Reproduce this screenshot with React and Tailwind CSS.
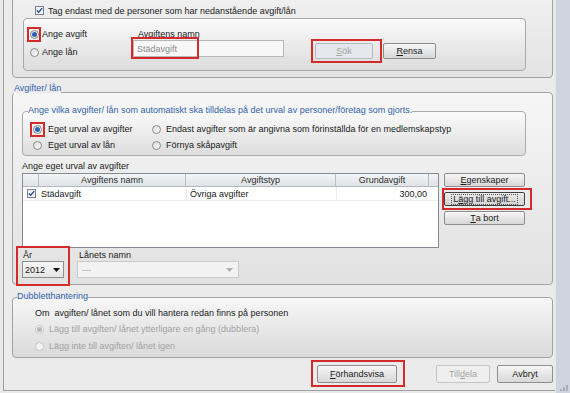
import React from 'react';

// Small Vista-style controls
const Radio = ({ checked, disabled }) => (
  <span
    className={`inline-flex w-[9px] h-[9px] shrink-0 rounded-full border items-center justify-center ${
      disabled ? 'border-[#c8c8c8] bg-[#f3f3f3]' : 'border-[#8a8a8a] bg-gradient-to-br from-[#dedede] to-[#fbfbfb]'
    }`}
  >
    {checked && <span className={`w-[5px] h-[5px] rounded-full ${disabled ? 'bg-[#b9b9b9]' : 'bg-[#2a62b5]'}`} />}
  </span>
);

const Check = () => (
  <span className="inline-flex w-[9px] h-[9px] shrink-0 border border-[#7e8288] bg-[#eef2f9] items-center justify-center">
    <svg width="7" height="7" viewBox="0 0 7 7">
      <path d="M0.8 3.4 L2.7 5.3 L6.2 1.1" fill="none" stroke="#2b4f8f" strokeWidth="1.4" />
    </svg>
  </span>
);

const Btn = ({ children, className = '', disabled, focused }) => (
  <div
    className={`flex items-center justify-center rounded-[2px] border ${
      disabled
        ? 'border-[#b5bac0] bg-[#e4e7eb] text-[#a4a4a4]'
        : focused
        ? 'border-[#3f3f3f] bg-gradient-to-b from-[#ececec] to-[#d2d2d2] text-[#1b1b1b]'
        : 'border-[#8e8e8e] bg-gradient-to-b from-[#f6f6f6] to-[#d8d8d8] text-[#1b1b1b]'
    } ${className}`}
  >
    {children}
  </div>
);

const Mark = ({ className }) => (
  <span className={`absolute border-2 border-[#d42a2a] pointer-events-none ${className}`} />
);

const U = ({ children }) => <span className="underline underline-offset-1">{children}</span>;

const Arrow = ({ color = '#111' }) => (
  <svg width="7" height="4" viewBox="0 0 7 4">
    <path d="M0 0 H7 L3.5 4 Z" fill={color} />
  </svg>
);

export default function App() {
  return (
    <div className="w-[570px] h-[393px] overflow-hidden flex bg-[#e9e9e9] text-[9px] leading-[10px] text-[#1b1b1b] font-['Liberation_Sans',Arial,sans-serif]">
      <div className="w-[3px] shrink-0" />

      {/* Main panel */}
      <div className="w-[552px] h-[391px] shrink-0 border-l border-b border-[#a0a0a0] flex flex-col pl-[8px] pr-[2px] bg-[#ebebeb]">
        {/* Top search box (cut off at the top) */}
        <div className="-mt-[10px] h-[88px] shrink-0 rounded-[4px] border border-[#a3a3a3] bg-gradient-to-b from-[#f1f1f1] to-[#e3e3e3] pt-[14px]">
          <div className="h-[11px] flex items-center gap-[4px] pl-[22px]">
            <Check />
            <span>Tag endast med de personer som har nedanstående avgift/lån</span>
          </div>
          <div className="mt-[2px] ml-[10px] w-[503px] h-[53px] rounded-[4px] border border-[#a9a9a9] bg-gradient-to-b from-[#fafafa] to-[#dcdcdc] flex">
            <div className="w-[109px] pl-[6px] pt-[9px] flex flex-col gap-[6px]">
              <div className="h-[12px] flex items-center gap-[3px]">
                <span className="relative flex">
                  <Radio checked />
                  <Mark className="-left-[3px] -top-[3px] w-[14px] h-[15px]" />
                </span>
                <span>Ange avgift</span>
              </div>
              <div className="h-[12px] flex items-center gap-[3px]">
                <Radio />
                <span>Ange lån</span>
              </div>
            </div>
            <div className="pt-[10px] flex flex-col">
              <span className="h-[10px] pl-[5px]">Avgiftens namn</span>
              <div className="relative mt-[1px] w-[151px] h-[17px] border border-[#b7b7b7] bg-[#f7f7f7] flex items-center pl-[3px] text-[#8d8d8d]">
                Städavgift
                <Mark className="-left-[3px] -top-[4px] w-[68px] h-[22px]" />
              </div>
            </div>
            <div className="pt-[24px] ml-[31px] flex">
              <div className="relative">
                <Btn disabled className="w-[58px] h-[16px]">
                  <U>S</U>ök
                </Btn>
                <Mark className="-left-[4px] -top-[4px] w-[71px] h-[24px]" />
              </div>
              <Btn className="ml-[10px] w-[53px] h-[16px]">
                <U>R</U>ensa
              </Btn>
            </div>
          </div>
        </div>

        {/* Avgifter/ lån */}
        <fieldset className="mt-[5px] rounded-[4px] border border-[#a3a3a3] bg-gradient-to-b from-[#f6f6f6] to-[#e1e1e1] pl-[9px] pb-[6px]">
          <legend className="-ml-[8px] leading-[10px] pb-[8px] text-[#3464ad]">Avgifter/ lån</legend>

          <fieldset className="mt-[4px] w-[504px] rounded-[4px] border border-[#ababab] bg-gradient-to-b from-[#fbfbfb] to-[#dddddd] pl-[10px] pt-[5px] pb-[4px]">
            <legend className="-ml-[5px] leading-[10px] pb-[3px] text-[#3464ad]">
              Ange vilka avgifter/ lån som automatiskt ska tilldelas på det urval av personer/företag som gjorts.
            </legend>
            <div className="grid grid-cols-[119px_auto] gap-y-[4px]">
              <div className="h-[12px] flex items-center gap-[6px]">
                <span className="relative flex">
                  <Radio checked />
                  <Mark className="-left-[3px] -top-[3px] w-[15px] h-[15px]" />
                </span>
                <span>Eget urval av avgifter</span>
              </div>
              <div className="h-[12px] flex items-center gap-[5px]">
                <Radio />
                <span>Endast avgifter som är angivna som förinställda för en medlemskapstyp</span>
              </div>
              <div className="h-[12px] flex items-center gap-[6px]">
                <Radio />
                <span>Eget urval av lån</span>
              </div>
              <div className="h-[12px] flex items-center gap-[5px]">
                <Radio />
                <span>Förnya skåpavgift</span>
              </div>
            </div>
          </fieldset>

          <div className="mt-[5px] h-[10px]">Ange eget urval av avgifter</div>

          <div className="mt-[2px] flex items-start">
            {/* Fee table */}
            <div className="w-[417px] h-[75px] border border-[#868a92] bg-white flex flex-col">
              <div className="h-[13px] grid grid-cols-[16px_147px_150px_93px_1fr] bg-gradient-to-b from-[#f4f5f7] to-[#dfe2e7] border-b border-[#b3b7bf] text-[#2b2b2b]">
                <div className="border-r border-[#b9bdc4]" />
                <div className="border-r border-[#b9bdc4] flex items-center justify-center">Avgiftens namn</div>
                <div className="border-r border-[#b9bdc4] flex items-center justify-center">Avgiftstyp</div>
                <div className="border-r border-[#b9bdc4] flex items-center justify-center">Grundavgift</div>
                <div />
              </div>
              <div className="h-[14px] grid grid-cols-[16px_147px_150px_93px_1fr] border-b border-[#ececec]">
                <div className="flex items-center justify-center">
                  <Check />
                </div>
                <div className="flex items-center pl-[2px]">Städavgift</div>
                <div className="flex items-center pl-[3px] border-l border-[#ececec]">Övriga avgifter</div>
                <div className="flex items-center justify-end pr-[2px] border-l border-[#ececec]">300,00</div>
                <div />
              </div>
            </div>

            {/* Side buttons */}
            <div className="ml-[5px] flex flex-col gap-[5px]">
              <Btn className="w-[81px] h-[14px]">
                <U>E</U>genskaper
              </Btn>
              <div className="relative">
                <Btn focused className="w-[81px] h-[14px]">
                  <span className="outline-1 outline-dotted outline-[#555] px-[1px] leading-[9px]">
                    L<U>ä</U>gg till avgift...
                  </span>
                </Btn>
                <Mark className="-left-[2px] -top-[4px] w-[90px] h-[22px]" />
              </div>
              <Btn className="w-[81px] h-[14px]">
                <U>T</U>a bort
              </Btn>
            </div>
          </div>

          <div className="mt-[2px] flex">
            <div className="relative flex flex-col w-[42px]">
              <span className="h-[10px] pl-[1px]">År</span>
              <div className="mt-[1px] h-[17px] border border-[#8d8d8d] bg-gradient-to-b from-[#f7f7f7] to-[#e6e6e6] flex items-center justify-between pl-[2px] pr-[3px]">
                <span>2012</span>
                <Arrow />
              </div>
              <Mark className="-left-[6px] -top-[4px] w-[54px] h-[40px]" />
            </div>
            <div className="ml-[13px] flex flex-col w-[162px]">
              <span className="h-[10px] pl-[2px]">Lånets namn</span>
              <div className="mt-[1px] h-[17px] border border-[#cbcbcb] bg-[#f2f2f2] flex items-center justify-between pl-[4px] pr-[5px] text-[#a8a8a8]">
                <span>---</span>
                <Arrow color="#b0b0b0" />
              </div>
            </div>
          </div>
        </fieldset>

        {/* Dubbletthantering */}
        <fieldset className="mt-[6px] rounded-[4px] border border-[#a3a3a3] bg-gradient-to-b from-[#f7f7f7] to-[#dadada] pl-[22px] pt-[5px] pb-[5px]">
          <legend className="-ml-[18px] leading-[10px] pb-[2px] text-[#3464ad]">Dubbletthantering</legend>
          <div className="h-[10px]">Om&nbsp; avgiften/ lånet som du vill hantera redan finns på personen</div>
          <div className="mt-[5px] flex flex-col gap-[5px] text-[#a2a2a2]">
            <div className="h-[12px] flex items-center gap-[5px]">
              <Radio checked disabled />
              <span>Lägg till avgiften/ lånet ytterligare en gång (dubblera)</span>
            </div>
            <div className="h-[12px] flex items-center gap-[5px]">
              <Radio disabled />
              <span>Lägg inte till avgiften/ lånet igen</span>
            </div>
          </div>
        </fieldset>

        {/* Bottom buttons */}
        <div className="mt-[7px] flex justify-end">
          <div className="relative">
            <Btn className="w-[80px] h-[18px]">
              <U>F</U>örhandsvisa
            </Btn>
            <Mark className="-left-[6px] -top-[5px] w-[94px] h-[27px]" />
          </div>
          <Btn disabled className="ml-[39px] w-[54px] h-[18px] !bg-[#efefef] !border-[#c4c4c4]">
            Till<U>d</U>ela
          </Btn>
          <Btn className="ml-[7px] w-[56px] h-[18px]">Avbryt</Btn>
        </div>
      </div>

      {/* Right frame strip */}
      <div className="flex-1 h-full flex flex-col bg-[#d0d4de] border-l border-[#e4e6ec]">
        <div className="flex-1" />
        <div className="h-[10px] flex items-end justify-end pr-[2px] pb-[2px] gap-[1px]">
          <span className="w-[2px] h-[2px] bg-[#a9adb8]" />
          <span className="w-[2px] h-[4px] bg-[#a9adb8]" />
          <span className="w-[2px] h-[6px] bg-[#a9adb8]" />
        </div>
      </div>
    </div>
  );
}
